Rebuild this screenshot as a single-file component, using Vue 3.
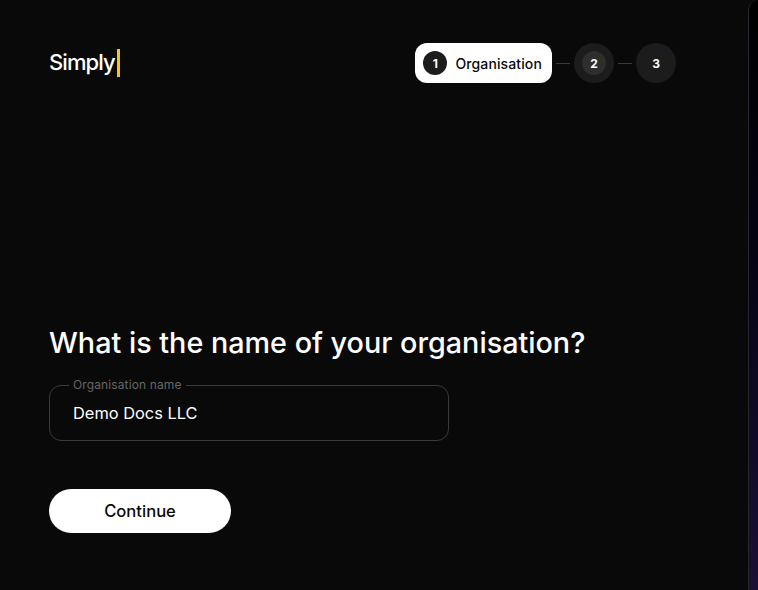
<script setup>
const steps = [
  { n: 1, label: 'Organisation', state: 'active' },
  { n: 2, state: 'current' },
  { n: 3, state: 'todo' }
]
</script>

<template>
  <div class="page">
    <main class="panel">
      <header class="top">
        <div class="logo">Simply<span class="caret"></span></div>
        <nav class="steps">
          <template v-for="(step, i) in steps" :key="step.n">
            <span v-if="i > 0" class="line"></span>
            <div v-if="step.label" class="pill">
              <span class="num">{{ step.n }}</span>
              <span class="pill-label">{{ step.label }}</span>
            </div>
            <div v-else class="dot" :class="step.state">
              <span class="dot-inner">{{ step.n }}</span>
            </div>
          </template>
        </nav>
      </header>

      <section class="form">
        <h1>What is the name of your organisation?</h1>
        <fieldset class="field">
          <legend>Organisation name</legend>
          <input type="text" value="Demo Docs LLC" />
        </fieldset>
        <button class="continue" type="button">Continue</button>
      </section>
    </main>
    <aside class="side"></aside>
  </div>
</template>

<style>
html, body {
  margin: 0;
  background: #000;
}
</style>

<style scoped>
.page {
  display: flex;
  width: 758px;
  height: 590px;
  overflow: hidden;
  background: #090909;
  font-family: Inter, "Liberation Sans", sans-serif;
}

.panel {
  width: 748px;
  box-sizing: border-box;
  padding: 43px 0 0 49px;
  flex: none;
}

.top {
  width: 627px;
  display: flex;
  justify-content: space-between;
  align-items: center;
}

.logo {
  display: flex;
  align-items: center;
  height: 40px;
  padding-bottom: 2px;
  box-sizing: border-box;
  color: #fff;
  font-size: 22px;
  font-weight: 500;
  letter-spacing: -0.9px;
}

.caret {
  width: 3px;
  height: 28px;
  margin: 2px 0 0 2px;
  background: #f5c518;
}

.steps {
  display: flex;
  align-items: center;
}

.pill {
  display: flex;
  align-items: center;
  gap: 8px;
  height: 40px;
  box-sizing: border-box;
  padding: 0 10px 0 8px;
  background: #fff;
  border-radius: 12px;
}

.num {
  width: 24px;
  height: 24px;
  border-radius: 50%;
  background: #1c1c1c;
  color: #fff;
  font-size: 12px;
  font-weight: 700;
  display: flex;
  align-items: center;
  justify-content: center;
}

.pill-label {
  color: #0a0a0a;
  font-size: 14px;
  font-weight: 450;
  letter-spacing: 0.12px;
}

.line {
  width: 14px;
  height: 1px;
  margin: 0 4px;
  background: #3a3a3a;
}

.dot {
  width: 40px;
  height: 40px;
  border-radius: 50%;
  background: #1c1c1c;
  display: flex;
  align-items: center;
  justify-content: center;
}

.dot-inner {
  width: 24px;
  height: 24px;
  border-radius: 50%;
  color: #fff;
  font-size: 12px;
  font-weight: 700;
  display: flex;
  align-items: center;
  justify-content: center;
}

.dot.current .dot-inner {
  background: #2e2e2e;
}

.form {
  margin-top: 242px;
}

h1 {
  margin: 0;
  color: #fff;
  font-size: 28.75px;
  line-height: 36px;
  font-weight: 500;
}

.field {
  margin: 17px 0 0;
  padding: 0 23px;
  width: 400px;
  height: 63px;
  box-sizing: border-box;
  border: 1px solid #3a3a3a;
  border-radius: 12px;
}

legend {
  padding: 0 4px;
  margin-left: -4px;
  color: #666;
  font-size: 12px;
  line-height: 14px;
  letter-spacing: 0.12px;
}

input {
  display: block;
  width: 100%;
  margin-top: 10px;
  padding: 0;
  border: 0;
  outline: 0;
  background: transparent;
  color: #fff;
  font-family: inherit;
  font-size: 16.4px;
  line-height: 22px;
}

.continue {
  display: block;
  width: 182px;
  height: 44px;
  margin-top: 48px;
  border: 0;
  border-radius: 22px;
  background: #fff;
  color: #0a0a0a;
  font-family: inherit;
  font-size: 16.6px;
  font-weight: 500;
}

.side {
  flex: 1;
  border-left: 1px solid #26262c;
  border-top-left-radius: 10px;
  background: linear-gradient(180deg, #000 0%, #050312 40%, #1a1035 100%);
}
</style>
